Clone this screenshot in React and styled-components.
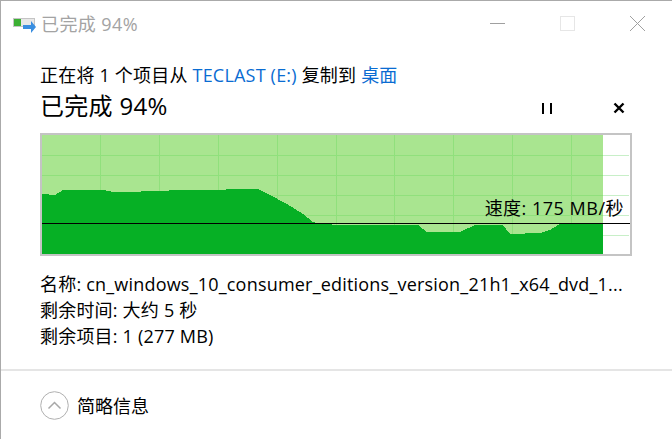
import React from 'react';
import styled, { createGlobalStyle } from 'styled-components';

const GlobalStyle = createGlobalStyle`
  html, body { margin: 0; padding: 0; background: #fff; }
  body { font-family: "Open Sans", "Noto Sans CJK SC", sans-serif; color: #000; }
`;

const Dialog = styled.div`
  width: 672px;
  height: 439px;
  box-sizing: border-box;
  display: flex;
  flex-direction: column;
  background: #fff;
  border-top: 1px solid #aaa;
  border-left: 1px solid #aaa;
  overflow: hidden;
`;

const TitleBar = styled.div`
  display: flex;
  align-items: center;
  height: 44px;
  padding-left: 12px;
  flex-shrink: 0;
`;

const TitleText = styled.span`
  margin-left: 5px;
  font-size: 18px;
  letter-spacing: 0.4px;
  color: #a3a3a3;
`;

const WindowButtons = styled.div`
  display: flex;
  align-items: center;
  gap: 55px;
  margin-left: auto;
  padding-right: 27px;
`;

const Content = styled.div`
  flex: 1;
  padding: 19px 39px 0 39px;
  letter-spacing: 0.2px;
`;

const FromLine = styled.div`
  font-size: 18px;
  line-height: 22px;
`;

const Link = styled.span`
  color: #0a6cd2;
`;

const StatusRow = styled.div`
  display: flex;
  align-items: center;
  height: 36px;
`;

const StatusText = styled.div`
  flex: 1;
  font-size: 24px;
  letter-spacing: 0.3px;
`;

const Controls = styled.div`
  display: flex;
  align-items: center;
  gap: 61px;
  padding: 8px 8px 0 0;
`;

const Chart = styled.div`
  position: relative;
  width: 592px;
  height: 123px;
  box-sizing: border-box;
  border: 2px solid #c4c4c4;
  margin-top: 11px;
`;

const Speed = styled.div`
  position: absolute;
  right: 6px;
  top: 61px;
  font-size: 18px;
  line-height: 24px;
  letter-spacing: 0.5px;
  white-space: nowrap;
`;

const Details = styled.div`
  margin-top: 15px;
  font-size: 18px;
  line-height: 26px;
`;

const DetailRow = styled.div`
  white-space: nowrap;
`;

const Footer = styled.div`
  height: 70px;
  box-sizing: border-box;
  flex-shrink: 0;
  display: flex;
  align-items: center;
  gap: 8px;
  padding-left: 39px;
  border-top: 2px solid #e5e5e5;
  font-size: 18px;
`;

const areaPoints = [
  [0, 59], [13, 60], [21, 55], [30, 55], [61, 55], [71, 57], [126, 56], [128, 55], [183, 55], [185, 54], [216, 54],
  [228, 60], [245, 69], [261, 79], [271, 87], [278, 89], [301, 90], [376, 90], [385, 97], [418, 97], [433, 90],
  [461, 90], [468, 99], [498, 98], [508, 95], [518, 89], [561, 89], [561, 119], [0, 119],
];

const verticals = [58, 117, 176, 235, 294, 352, 411, 470, 529];
const horizontals = [20, 40, 60, 80, 100];

const GraphSvg = () => (
  <svg width="588" height="119" style={{ display: 'block' }} shapeRendering="crispEdges">
    <rect x="0" y="0" width="561" height="119" fill="#a9e590" />
    {horizontals.map((y) => (
      <React.Fragment key={y}>
        <line x1="0" x2="561" y1={y + 0.5} y2={y + 0.5} stroke="#90e07c" />
        <line x1="561" x2="587" y1={y + 0.5} y2={y + 0.5} stroke="#c8efc8" />
      </React.Fragment>
    ))}
    {verticals.map((x) => (
      <line key={x} x1={x + 0.5} x2={x + 0.5} y1="0" y2="119" stroke="#90e07c" />
    ))}
    <polygon points={areaPoints.map((p) => p.join(',')).join(' ')} fill="#06b025" />
    <line x1="0" x2="588" y1="88.5" y2="88.5" stroke="#000" />
  </svg>
);

const CopyIcon = () => (
  <svg width="23" height="22" viewBox="0 0 23 22">
    <rect x="0.5" y="6.5" width="21" height="8" fill="#e8e8e8" stroke="#c4c4c4" />
    <rect x="1" y="7" width="7" height="7" fill="#3cb034" />
    <path d="M10 13h8v-4l5 6-5 6v-4h-8z" fill="#3a8ee0" />
  </svg>
);

const App = () => (
  <>
    <GlobalStyle />
    <Dialog>
      <TitleBar>
        <CopyIcon />
        <TitleText>已完成 94%</TitleText>
        <WindowButtons>
          <svg width="15" height="1"><rect width="15" height="1" fill="#a0a0a0" /></svg>
          <svg width="15" height="15"><rect x="0.5" y="0.5" width="14" height="14" fill="none" stroke="#e6e6e6" /></svg>
          <svg width="15" height="15"><path d="M0 0L15 15M15 0L0 15" stroke="#a0a0a0" /></svg>
        </WindowButtons>
      </TitleBar>
      <Content>
        <FromLine>
          正在将 1 个项目从 <Link>TECLAST (E:)</Link> 复制到 <Link>桌面</Link>
        </FromLine>
        <StatusRow>
          <StatusText>已完成 94%</StatusText>
          <Controls>
            <svg width="10" height="11"><path d="M0 0h2v11H0zM8 0h2v11H8z" fill="#000" /></svg>
            <svg width="12" height="12"><path d="M1.5 1.5L10.5 10.5M10.5 1.5L1.5 10.5" stroke="#000" strokeWidth="2.4" /></svg>
          </Controls>
        </StatusRow>
        <Chart>
          <GraphSvg />
          <Speed>速度: 175 MB/秒</Speed>
        </Chart>
        <Details>
          <DetailRow>名称: cn_windows_10_consumer_editions_version_21h1_x64_dvd_1...</DetailRow>
          <DetailRow>剩余时间: 大约 5 秒</DetailRow>
          <DetailRow>剩余项目: 1 (277 MB)</DetailRow>
        </Details>
      </Content>
      <Footer>
        <svg width="29" height="29" viewBox="0 0 29 29">
          <circle cx="14.5" cy="14.5" r="13.8" fill="none" stroke="#b0b0b0" />
          <path d="M8.5 17.5L14.5 11.5L20.5 17.5" fill="none" stroke="#a8a8a8" strokeWidth="1.5" />
        </svg>
        简略信息
      </Footer>
    </Dialog>
  </>
);

export default App;
